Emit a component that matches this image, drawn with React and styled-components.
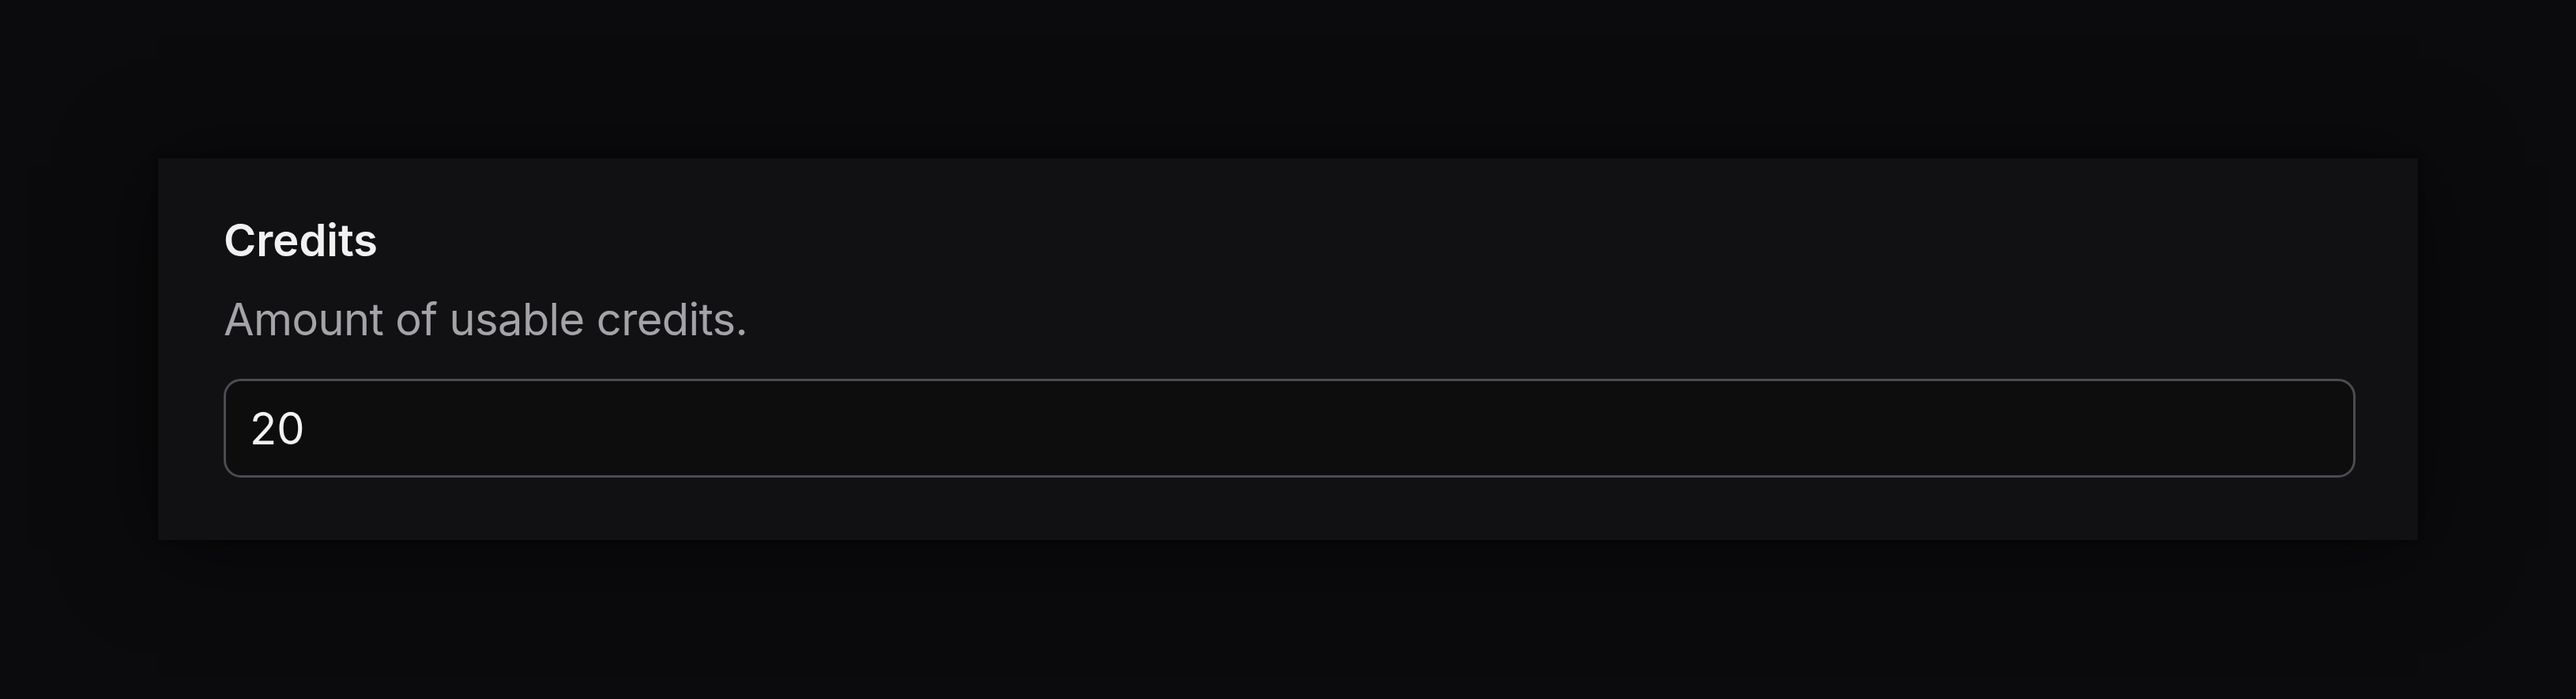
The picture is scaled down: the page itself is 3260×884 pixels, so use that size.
import React from "react";
import styled, { createGlobalStyle } from "styled-components";

const GlobalStyle = createGlobalStyle`
  html, body {
    margin: 0;
    padding: 0;
    background: #0b0b0d;
  }
  body {
    font-family: Inter, "Noto Sans", "Liberation Sans", sans-serif;
    -webkit-font-smoothing: antialiased;
  }
`;

const Page = styled.div`
  min-height: 884px;
  box-sizing: border-box;
  padding: 200px;
  background: #0b0b0d;
`;

const Card = styled.section`
  box-sizing: border-box;
  background: #111113;
  padding: 64px 79px 79px 83px;
  box-shadow: 0 0 6px rgba(0, 0, 0, 0.6), 0 10px 110px rgba(0, 0, 0, 0.55);
  display: flex;
  flex-direction: column;
`;

const Title = styled.h2`
  margin: 0;
  font-size: 56px;
  line-height: 80px;
  font-weight: 600;
  color: #f1f1f2;
`;

const Description = styled.p`
  margin: 20px 0 35px;
  font-size: 56px;
  line-height: 80px;
  font-weight: 400;
  letter-spacing: -0.6px;
  color: #a3a3a8;
`;

const Input = styled.input`
  box-sizing: border-box;
  width: 100%;
  height: 125px;
  padding: 0 30px;
  border: 3px solid #4a4c52;
  border-radius: 22px;
  background: #0d0d0e;
  color: #f3f3f4;
  font-family: inherit;
  font-size: 56px;
  outline: none;
`;

export default function App() {
  return (
    <>
      <GlobalStyle />
      <Page>
        <Card>
          <Title>Credits</Title>
          <Description>Amount of usable credits.</Description>
          <Input type="text" defaultValue="20" />
        </Card>
      </Page>
    </>
  );
}
